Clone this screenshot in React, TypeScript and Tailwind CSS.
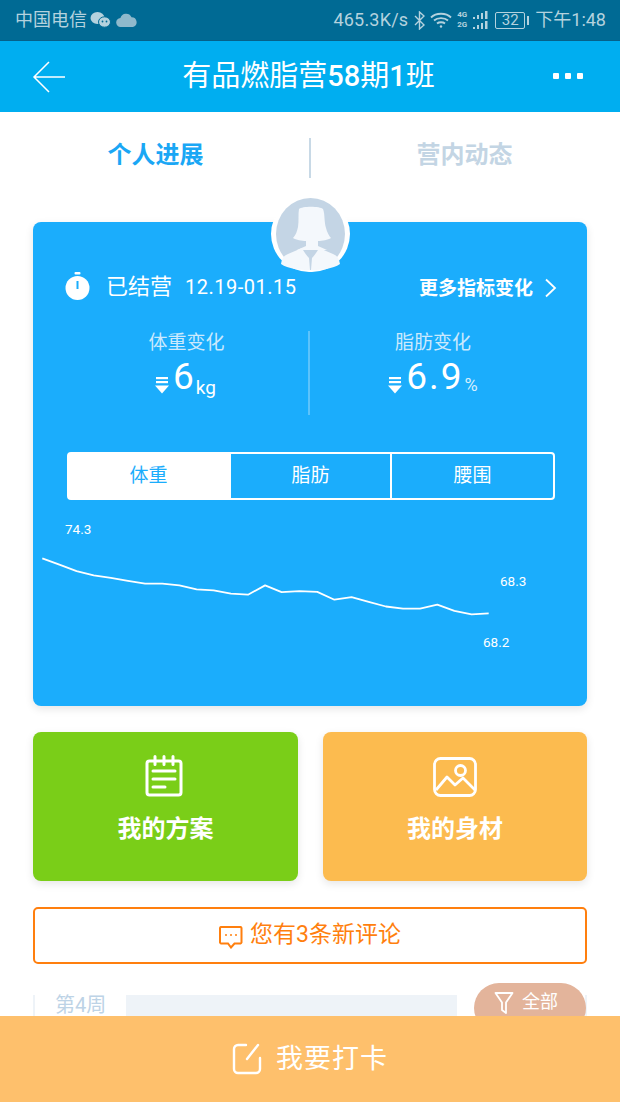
const font = { fontFamily: '"Roboto", "Noto Sans CJK SC", sans-serif' };

const pts = [[138,166],[186,184],[234,202],[282,214],[330,221],[378,229],[426,237],[474,237],[522,242],[570,253],[618,256],[666,265],[714,268],[762,242],[808,261],[858,258],[908,260],[956,282],[1004,275],[1052,288],[1100,301],[1148,307],[1196,307],[1244,296],[1292,313],[1340,323],[1388,320]]
  .map(([x, y]) => `${(x / 2.8 - 37).toFixed(1)},${(y / 2.8 - 10).toFixed(1)}`)
  .join(" ");

function Down() {
  return (
    <svg width="14" height="18" viewBox="0 0 14 18" className="mr-[4px] mt-[6px]">
      <rect x="1" y="0" width="12" height="2.2" fill="#fff" />
      <rect x="1" y="4" width="12" height="2.2" fill="#fff" />
      <path d="M0 8.5h14l-7 8z" fill="#fff" />
    </svg>
  );
}

export default function App() {
  return (
    <div style={font} className="relative w-[620px] h-[1102px] overflow-hidden bg-white flex flex-col">
      {/* status bar */}
      <div className="h-[41px] shrink-0 bg-[#006a94] border-b border-[#05618a] flex items-center justify-between pl-[15px] pr-[14px] text-[#b4d2de]">
        <div className="flex items-center">
          <span className="text-[18px] leading-none">中国电信</span>
          <svg width="21" height="18" viewBox="0 0 21 18" className="ml-[3px]" fill="#b4d2de">
            <ellipse cx="7.5" cy="7" rx="7" ry="6" />
            <ellipse cx="14.5" cy="11" rx="6" ry="5.2" stroke="#006a94" strokeWidth="1" />
            <circle cx="12.5" cy="10.5" r="0.9" fill="#006a94" />
            <circle cx="16.5" cy="10.5" r="0.9" fill="#006a94" />
          </svg>
          <svg width="22" height="14" viewBox="0 0 22 14" className="ml-[5px]" fill="#8fb9cc">
            <path d="M5 14a4.500 4.500 0 0 1-.6-9A6 6 0 0 1 15.500 4.200 5 5 0 0 1 17 14z" />
          </svg>
        </div>
        <div className="flex items-center">
          <span className="text-[18px] leading-none tracking-[0.2px]">465.3K/s</span>
          <svg width="11" height="19" viewBox="0 0 11 19" className="ml-[6px]" fill="none" stroke="#b4d2de" strokeWidth="1.4">
            <path d="M1 5l9 9-4.500 4V1l4.500 4-9 9" />
          </svg>
          <svg width="22" height="18" viewBox="0 0 22 18" className="ml-[5px]" fill="none" stroke="#b4d2de" strokeWidth="1.800">
            <path d="M1 6.500C6 1.500 16 1.500 21 6.500" />
            <path d="M4 9.500c3.500-3.300 10.500-3.300 14 0" />
            <path d="M7 12.500c2-1.700 6-1.700 8 0" />
            <circle cx="11" cy="15.500" r="1.200" fill="#b4d2de" stroke="none" />
          </svg>
          <div className="ml-[5px] flex flex-col text-[8px] leading-[10px] font-bold w-[14px]">
            <span>4G</span>
            <span>2G</span>
          </div>
          <svg width="19" height="20" viewBox="0 0 19 20" className="ml-[1px]" fill="#b4d2de">
            <rect x="1" y="7" width="2" height="2" /><rect x="5" y="5" width="2" height="4" /><rect x="9" y="3" width="2" height="6" /><rect x="13" y="1" width="2.500" height="8" />
            <rect x="1" y="17" width="2" height="2" /><rect x="5" y="15" width="2" height="4" /><rect x="9" y="13" width="2" height="6" /><rect x="13" y="11" width="2.500" height="8" />
          </svg>
          <div className="ml-[4px] w-[30px] h-[17px] border border-[#b4d2de] rounded-[2px] text-[15px] leading-[15px] text-center">32</div>
          <div className="w-[2px] h-[9px] bg-[#b4d2de] ml-[2px] mr-[6px]" />
          <span className="text-[18px] leading-none">下午1:48</span>
        </div>
      </div>

      {/* header */}
      <div className="h-[71px] shrink-0 bg-[#00aef0] flex items-center justify-between pl-[32px] pr-[37px]">
        <svg width="34" height="32" viewBox="0 0 34 32" fill="none" stroke="#fff" strokeWidth="1.500">
          <path d="M17 1L2 16l15 15M2 16h31" />
        </svg>
        <div className="text-white text-[29px] leading-none flex-1 text-center pr-[2px]">
          有品燃脂营<span className="font-medium">58</span>期<span className="font-medium">1</span>班
        </div>
        <div className="flex gap-[6px] mb-[2px]">
          <div className="w-[6px] h-[6px] bg-white rounded-[1px]" />
          <div className="w-[6px] h-[6px] bg-white rounded-[1px]" />
          <div className="w-[6px] h-[6px] bg-white rounded-[1px]" />
        </div>
      </div>

      {/* tabs */}
      <div className="h-[84px] shrink-0 flex items-center text-[24px] font-bold leading-none">
        <div className="w-[309px] text-center text-[#1aa7f5] pl-[2px] mt-[1px]">个人进展</div>
        <div className="w-[2px] h-[40px] bg-[#c8d9e6] mt-[8px]" />
        <div className="flex-1 text-center text-[#c3d5e4] pr-[2px] mt-[1px]">营内动态</div>
      </div>

      {/* main */}
      <div className="mt-[26px] px-[33px] flex flex-col shrink-0">
        <div className="relative h-[484px] rounded-[8px] bg-[#1badfc] shadow-[0_3px_8px_rgba(0,0,0,0.10)] text-white">
          {/* avatar */}
          <div className="absolute left-[238px] top-[-26px] w-[79px] h-[76px] rounded-full bg-white flex items-center justify-center">
            <svg width="69" height="72" viewBox="0 0 69 72">
              <ellipse cx="34.500" cy="36" rx="34.500" ry="36" fill="#c4d5e5" />
              <path d="M23 11c3-3 21-3 24 0 2 5 1 12 3 19 1 4 3 8 5 10-3 2-9 3-13 3v5l9 4H21l9-4v-5c-4 0-10-1-13-3 3-3 4-7 5-11 1-6 0-13 1-18z" fill="#f4f8fc" />
              <path d="M5 66c1-5 2-8 7-10l14-6c2 4 5 8 7 10l1 12c-10 0-22-1-29-6zM64 66c-1-5-2-8-7-10l-14-6c-2 4-5 8-7 10l-1 12c10 0 22-1 29-6z" fill="#f4f8fc" />
            </svg>
          </div>

          {/* card header */}
          <div className="absolute-none pt-[50px] pl-[32px] pr-[30px] flex items-center justify-between">
            <div className="flex items-center">
              <svg width="25" height="30" viewBox="0 0 25 30" className="mr-[16px]">
                <rect x="9.500" y="0" width="6" height="2.500" rx="1" fill="#fff" />
                <circle cx="12.500" cy="16" r="12" fill="#fff" />
                <rect x="11.500" y="9" width="2" height="8" fill="#1badfc" />
              </svg>
              <span className="text-[22px] leading-none">已结营</span>
              <span className="text-[20px] leading-none ml-[13px] tracking-[0.5px]">12.19-01.15</span>
            </div>
            <div className="flex items-center mt-[2px]">
              <span className="text-[19px] font-bold leading-none">更多指标变化</span>
              <svg width="13" height="20" viewBox="0 0 13 20" className="ml-[11px]" fill="none" stroke="#fff" strokeWidth="1.800">
                <path d="M2 1.500L11 10l-9 8.500" />
              </svg>
            </div>
          </div>

          {/* stats */}
          <div className="mt-[29px] flex h-[84px] ml-[32px] mr-[31px]">
            <div className="w-[243px] flex flex-col items-center">
              <div className="text-[19px] leading-none text-[#cbe9fd] mt-[2px]">体重变化</div>
              <div className="flex items-end mt-[7px] h-[36px] pr-[2px]">
                <Down />
                <span className="text-[37px] leading-[36px]">6</span>
                <span className="text-[19px] leading-[22px] ml-[2px] mb-[-4px]">kg</span>
              </div>
            </div>
            <div className="w-[2px] bg-[#5cc3fb]" />
            <div className="flex-1 flex flex-col items-center">
              <div className="text-[19px] leading-none text-[#cbe9fd] mt-[2px]">脂肪变化</div>
              <div className="flex items-end mt-[7px] h-[36px]">
                <Down />
                <span className="text-[37px] leading-[36px] tracking-[2px]">6.9</span>
                <span className="text-[18px] leading-[22px] ml-[1px] mb-[-1px] text-[#d7effe]">%</span>
              </div>
            </div>
          </div>

          {/* segmented */}
          <div className="mt-[37px] ml-[34px] w-[488px] h-[48px] border-2 border-white rounded-[4px] flex text-[19px]">
            <div className="w-[162px] bg-white text-[#1badfc] flex items-center justify-center pr-[3px]">体重</div>
            <div className="w-[161px] border-r-2 border-white flex items-center justify-center">脂肪</div>
            <div className="flex-1 flex items-center justify-center">腰围</div>
          </div>

          {/* chart */}
          <svg width="554" height="193" viewBox="0 0 554 193" className="block">
            <polyline points={pts} transform="translate(-3,9)" fill="none" stroke="#fff" strokeWidth="1.800" strokeLinejoin="round" />
            <g fill="#fff" fontSize="13.500" style={font}>
              <text x="32" y="34">74.3</text>
              <text x="467" y="86">68.3</text>
              <text x="450" y="147">68.2</text>
            </g>
          </svg>
        </div>

        {/* action cards */}
        <div className="mt-[26px] flex justify-between">
          <div className="w-[265px] h-[149px] rounded-[8px] bg-[#7ace18] shadow-[0_3px_8px_rgba(0,0,0,0.10)] flex flex-col items-center text-white">
            <svg width="38" height="42" viewBox="0 0 38 42" className="mt-[23px] mr-[3px]" fill="none" stroke="#fff" strokeWidth="3" strokeLinecap="round">
              <rect x="2" y="6" width="34" height="34" rx="2.500" />
              <path d="M10 1.500v8M19 1.500v8M28 1.500v8M8 16h22M8 24h22M8 32h12" />
            </svg>
            <div className="text-[24px] font-bold leading-none mt-[20px]">我的方案</div>
          </div>
          <div className="w-[264px] h-[149px] rounded-[8px] bg-[#fcbb4f] shadow-[0_3px_8px_rgba(0,0,0,0.10)] flex flex-col items-center text-white">
            <svg width="44" height="40" viewBox="0 0 44 40" className="mt-[25px]" fill="none" stroke="#fff" strokeWidth="2.800" strokeLinejoin="round">
              <rect x="1.500" y="1.500" width="41" height="37" rx="6" />
              <circle cx="27.500" cy="13.500" r="5" />
              <path d="M3 33l11-13 8 8 8-7 12 12" />
            </svg>
            <div className="text-[24px] font-bold leading-none mt-[20px]">我的身材</div>
          </div>
        </div>

        {/* comments */}
        <div className="mt-[26px] h-[57px] border-2 border-[#ff7f0e] rounded-[5px] flex items-center justify-center text-[#ff7f0e]">
          <svg width="24" height="24" viewBox="0 0 24 24" className="mr-[7px] mt-[3px]" fill="none" stroke="#ff7f0e" strokeWidth="2">
            <path d="M2.500 2h19a1.500 1.500 0 0 1 1 1v14.500a1.500 1.500 0 0 1-1 1h-6l-3.500 4-3-4h-7a1.500 1.500 0 0 1-1-1V3a1.500 1.500 0 0 1 1-1z" />
            <circle cx="7" cy="10" r="1" fill="#ff7f0e" stroke="none" /><circle cx="12" cy="10" r="1" fill="#ff7f0e" stroke="none" /><circle cx="17" cy="10" r="1" fill="#ff7f0e" stroke="none" />
          </svg>
          <span className="text-[23px] leading-none pb-[2px]">您有3条新评论</span>
        </div>

        {/* feed stub */}
        <div className="relative mt-[31px] flex h-[60px] border-x-2 border-[#eef3f8]">
          <div className="w-[91px] pl-[20px] text-[20px] leading-[20px] text-[#bdd3e6]">第4周</div>
          <div className="w-[331px] bg-[#eef3f8]" />
        </div>
      </div>

      {/* filter pill */}
      <div className="absolute left-[474px] top-[983px] w-[112px] h-[50px] rounded-[25px] bg-[#e3b49b] text-white flex items-start pt-[8px] pl-[20px]">
        <svg width="20" height="24" viewBox="0 0 20 24" fill="none" stroke="#fff" strokeWidth="1.800" strokeLinejoin="round" className="mr-[8px]">
          <path d="M1.500 2h17l-6.500 9.500V22l-4-3v-7.500z" />
        </svg>
        <span className="text-[18px] leading-[22px]">全部</span>
      </div>

      {/* bottom bar */}
      <div className="absolute left-0 right-0 bottom-0 h-[86px] bg-[#fec06c] flex items-center justify-center text-white">
        <svg width="30" height="32" viewBox="0 0 30 32" fill="none" stroke="#fff" strokeWidth="2.400" strokeLinecap="round" className="mr-[14px]">
          <path d="M14 2H6a4 4 0 0 0-4 4v20a4 4 0 0 0 4 4h18a4 4 0 0 0 4-4V15" />
          <path d="M15 16L26 2" />
        </svg>
        <span className="text-[27px] leading-none tracking-[1px]">我要打卡</span>
      </div>
    </div>
  );
}
